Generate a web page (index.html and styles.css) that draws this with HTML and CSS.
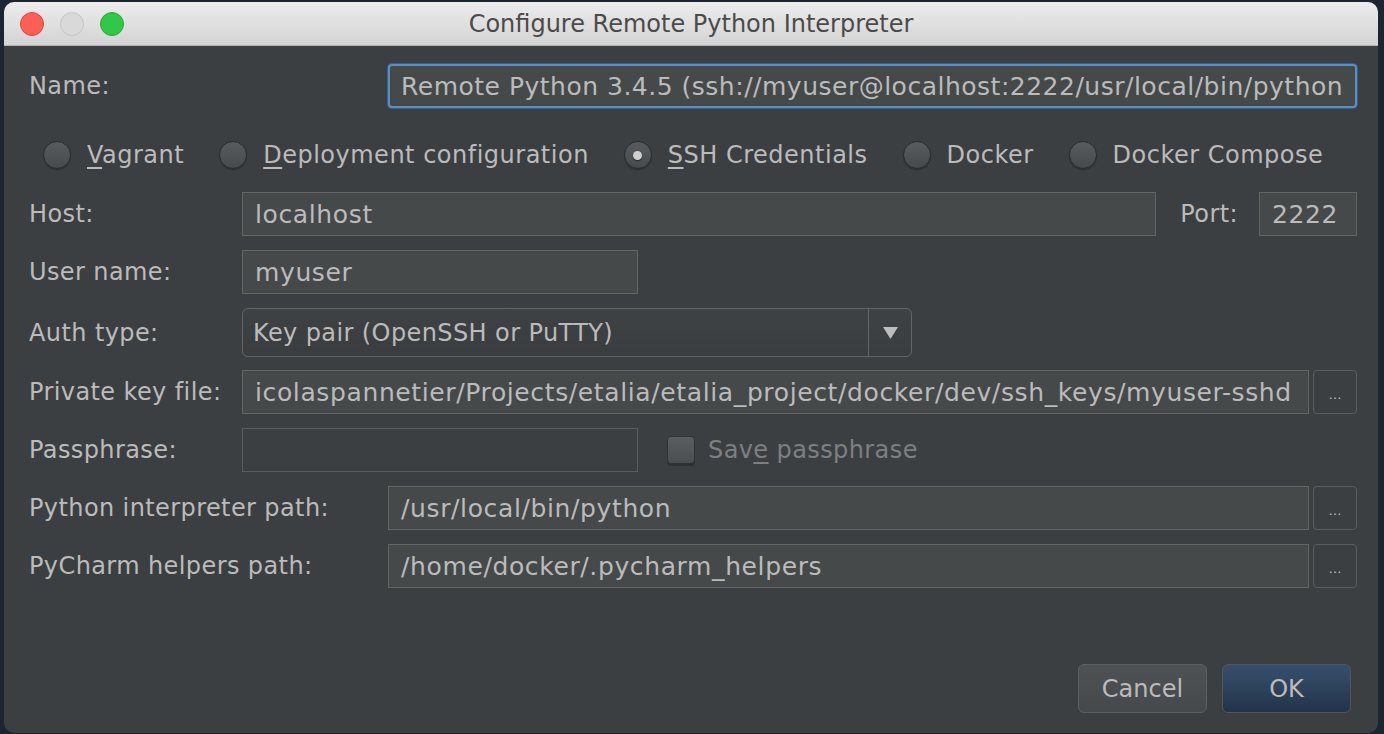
FILE: index.html
```html
<!DOCTYPE html>
<html>
<head>
<meta charset="utf-8">
<title>Configure Remote Python Interpreter</title>
<link rel="stylesheet" href="styles.css">
</head>
<body>
<div class="desk">
  <div class="window">
    <div class="titlebar">
      <div class="lights">
        <span class="light red"></span>
        <span class="light gray"></span>
        <span class="light green"></span>
      </div>
      <div class="title">Configure Remote Python Interpreter</div>
      <div></div>
    </div>
    <div class="content">
      <div class="row first">
        <div class="lbl wide">Name:</div>
        <div class="field focused grow"><span class="clip">Remote Python 3.4.5 (ssh://myuser@localhost:2222/usr/local/bin/python)</span></div>
      </div>
      <div class="radios">
        <div class="radio"><span class="dot"></span><span><u>V</u>agrant</span></div>
        <div class="radio"><span class="dot"></span><span><u>D</u>eployment configuration</span></div>
        <div class="radio"><span class="dot on"></span><span><u>S</u>SH Credentials</span></div>
        <div class="radio"><span class="dot"></span><span>Docker</span></div>
        <div class="radio"><span class="dot"></span><span>Docker Compose</span></div>
      </div>
      <div class="row">
        <div class="lbl">Host:</div>
        <div class="field grow">localhost</div>
        <div class="port-lbl">Port:</div>
        <div class="field port">2222</div>
      </div>
      <div class="row">
        <div class="lbl">User name:</div>
        <div class="field short">myuser</div>
      </div>
      <div class="row combo-row">
        <div class="lbl">Auth type:</div>
        <div class="combo">
          <div class="combo-text">Key pair (OpenSSH or PuTTY)</div>
          <div class="combo-arrow"><svg width="15" height="12" viewBox="0 0 15 12"><polygon points="0,0 15,0 7.5,12" fill="#bdbdbd"/></svg></div>
        </div>
      </div>
      <div class="row">
        <div class="lbl">Private key file:</div>
        <div class="field grow"><span class="clip">icolaspannetier/Projects/etalia/etalia_project/docker/dev/ssh_keys/myuser-sshd</span></div>
        <div class="browse">…</div>
      </div>
      <div class="row">
        <div class="lbl">Passphrase:</div>
        <div class="field short disabled"></div>
        <span class="check"></span>
        <span class="check-lbl">Sav<u>e</u> passphrase</span>
      </div>
      <div class="row">
        <div class="lbl wide">Python interpreter path:</div>
        <div class="field grow">/usr/local/bin/python</div>
        <div class="browse">…</div>
      </div>
      <div class="row">
        <div class="lbl wide">PyCharm helpers path:</div>
        <div class="field grow">/home/docker/.pycharm_helpers</div>
        <div class="browse">…</div>
      </div>
    </div>
    <div class="footer">
      <button class="btn">Cancel</button>
      <button class="btn primary">OK</button>
    </div>
  </div>
</div>
</body>
</html>
```
FILE: styles.css
```css
* { box-sizing: border-box; }
html, body { margin: 0; padding: 0; }
body {
  background: #1d2630;
  font-family: "DejaVu Sans", Verdana, sans-serif;
  overflow: hidden;
}
.desk {
  height: 734px;
  padding: 2px 6px 0 4px;
  display: flex;
}
.window {
  flex: 1;
  height: 731px;
  background: #3c3f41;
  border-radius: 10px;
  display: flex;
  flex-direction: column;
  overflow: hidden;
}
.titlebar {
  height: 44px;
  flex: none;
  background: linear-gradient(#ececec, #d4d4d4);
  border-bottom: 1px solid #b3b3b3;
  display: grid;
  grid-template-columns: 1fr auto 1fr;
  align-items: center;
}
.lights {
  display: flex;
  gap: 16px;
  padding-left: 16px;
}
.light {
  width: 24px;
  height: 24px;
  border-radius: 50%;
  display: block;
}
.red { background: #fc5f57; border: 1px solid #e0443e; }
.gray { background: #d9d9d9; border: 1px solid #c4c4c4; }
.green { background: #33c748; border: 1px solid #27aa35; }
.title {
  font-size: 24px;
  color: #4b4b4b;
}
.content {
  padding: 18px 21px 0 25px;
  display: flex;
  flex-direction: column;
}
.row {
  display: flex;
  align-items: center;
  height: 44px;
  margin-top: 14px;
  flex: none;
}
.row.first { margin-top: 0; }
.row.combo-row { height: 49px; margin-bottom: -1px; }
.lbl {
  width: 213px;
  flex: none;
  font-size: 24px;
  letter-spacing: 0.4px;
  color: #bbbbbb;
  white-space: nowrap;
}
.lbl.wide { width: 359px; }
.field {
  height: 44px;
  background: #45494a;
  border: 1px solid #646464;
  padding: 0 12px;
  display: flex;
  align-items: center;
  color: #bbbbbb;
  font-size: 25px;
  letter-spacing: 0.62px;
  white-space: nowrap;
  overflow: hidden;
}
.field.grow { flex: 1; min-width: 0; }
.field.short { width: 396px; flex: none; }
.field.port { width: 98px; flex: none; }
.field.disabled { background: #3c3f41; border-color: #5a5c5e; }
.field.focused {
  border: 2px solid #5a8fc6;
  border-radius: 4px;
  box-shadow: 0 0 0 1px #395f87;
  padding-left: 11px;
  letter-spacing: 0.5px;
}
.clip { overflow: hidden; white-space: nowrap; }
.port-lbl {
  font-size: 24px;
  letter-spacing: 0.4px;
  color: #bbbbbb;
  margin: 0 21px 0 24px;
}
.radios {
  display: flex;
  align-items: center;
  gap: 35px;
  height: 36px;
  margin: 29px 0 5px 14px;
  font-size: 24px;
  letter-spacing: 0.5px;
  color: #bbbbbb;
}
.radio {
  display: flex;
  align-items: center;
  gap: 16px;
  white-space: nowrap;
}
.radio u, .check-lbl u { text-underline-offset: 4px; }
.dot {
  width: 28px;
  height: 28px;
  border-radius: 50%;
  background: linear-gradient(#595c5e, #464a4c);
  border: 1px solid #2a2c2e;
  box-shadow: 0 1px 1px rgba(0,0,0,0.3);
  display: flex;
  align-items: center;
  justify-content: center;
}
.dot.on::after {
  content: "";
  width: 9px;
  height: 9px;
  border-radius: 50%;
  background: #cfcfcf;
  box-shadow: 0 1px 1px rgba(0,0,0,0.5);
}
.combo {
  width: 670px;
  height: 49px;
  border: 1px solid #646464;
  border-radius: 6px;
  background: linear-gradient(#3f4244, #3a3d3f);
  display: flex;
  align-items: stretch;
}
.combo-text {
  flex: 1;
  display: flex;
  align-items: center;
  padding-left: 10px;
  font-size: 24px;
  letter-spacing: 0.4px;
  color: #bbbbbb;
  white-space: nowrap;
}
.combo-arrow {
  width: 43px;
  border-left: 1px solid #646464;
  display: flex;
  align-items: center;
  justify-content: center;
}
.browse {
  width: 44px;
  height: 44px;
  flex: none;
  margin-left: 4px;
  border: 1px solid #5a5d5f;
  border-radius: 4px;
  background: #3c3f41;
  color: #bbbbbb;
  font-size: 13px;
  display: flex;
  align-items: center;
  justify-content: center;
  padding-top: 4px;
}
.check {
  width: 28px;
  height: 28px;
  flex: none;
  margin-left: 29px;
  border-radius: 4px;
  background: linear-gradient(#5b5e60, #4b4e50);
  border: 1px solid #303234;
  box-shadow: 0 2px 0 #2e3032;
}
.check-lbl {
  margin-left: 13px;
  font-size: 24px;
  letter-spacing: 0.4px;
  color: #7d7f80;
  white-space: nowrap;
}
.footer {
  margin-top: auto;
  display: flex;
  justify-content: flex-end;
  gap: 15px;
  padding: 0 27px 20px 0;
}
.btn {
  width: 129px;
  height: 49px;
  border-radius: 6px;
  font-family: inherit;
  font-size: 24px;
  color: #bbbbbb;
  border: 1px solid #5b5f61;
  background: linear-gradient(#4e5254, #45494b);
  padding: 0;
}
.btn.primary {
  background: linear-gradient(#374f6d, #233449);
  border-color: #4f555a;
}
```
